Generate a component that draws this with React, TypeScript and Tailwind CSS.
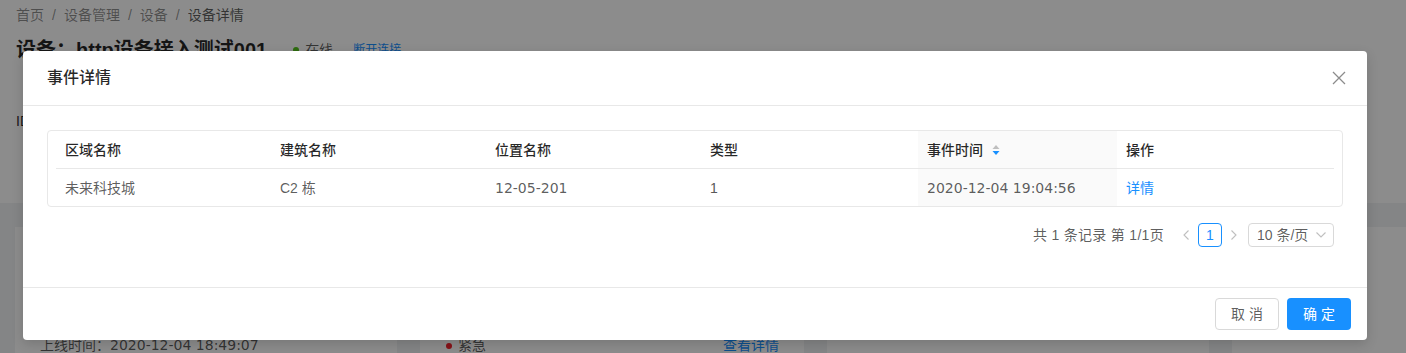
const cols = [
  { key: 'area', title: '区域名称', w: 'w-[215px]' },
  { key: 'building', title: '建筑名称', w: 'w-[215px]' },
  { key: 'place', title: '位置名称', w: 'w-[215px]' },
  { key: 'type', title: '类型', w: 'w-[217px]' },
  { key: 'time', title: '事件时间', w: 'w-[199px]', sorted: true },
  { key: 'op', title: '操作', w: 'w-[217px]' },
];

const rows = [
  { area: '未来科技城', building: 'C2 栋', place: '12-05-201', type: '1', time: '2020-12-04 19:04:56' },
];

// numbers in the reference are set wider than Arial metrics
const num = "font-['DejaVu_Sans','Noto_Sans_CJK_SC',sans-serif]";

function SortCaret() {
  return (
    <svg width="8" height="12" viewBox="0 0 8 12" className="ml-[9px]">
      <path d="M4 1 L7.5 5 L0.5 5 Z" fill="#bfbfbf" />
      <path d="M4 11 L7.5 7 L0.5 7 Z" fill="#1890ff" />
    </svg>
  );
}

function CloseIcon() {
  return (
    <svg width="14" height="14" viewBox="0 0 14 14" fill="none" stroke="currentColor" strokeWidth="1.3">
      <path d="M1 1 L13 13 M13 1 L1 13" />
    </svg>
  );
}

function Chevron({ dir }: { dir: 'left' | 'right' | 'down' }) {
  if (dir === 'down') {
    return (
      <svg width="10" height="6" viewBox="0 0 10 6" fill="none" stroke="#bfbfbf" strokeWidth="1.1">
        <path d="M0.5 0.5 L5 5 L9.5 0.5" />
      </svg>
    );
  }
  return (
    <svg width="6" height="10" viewBox="0 0 6 10" fill="none" stroke="#bfbfbf" strokeWidth="1.1">
      <path d={dir === 'left' ? 'M5.5 0.5 L1 5 L5.5 9.5' : 'M0.5 0.5 L5 5 L0.5 9.5'} />
    </svg>
  );
}

function EventTable() {
  return (
    <div className="rounded border border-[#e8e8e8] px-2">
      <div className="flex h-[38px] border-b border-[#e8e8e8] font-medium text-black/85">
        {cols.map((c) => (
          <div
            key={c.key}
            className={`${c.w} flex items-center px-[9px] ${c.sorted ? 'bg-[#fafafa]' : ''}`}
          >
            {c.title}
            {c.sorted && <SortCaret />}
          </div>
        ))}
      </div>
      {rows.map((r, i) => (
        <div key={i} className="flex h-[37px] text-black/65">
          <div className="w-[215px] flex items-center px-[9px]">{r.area}</div>
          <div className="w-[215px] flex items-center px-[9px]">{r.building}</div>
          <div className={`w-[215px] flex items-center px-[9px] ${num}`}>{r.place}</div>
          <div className="w-[217px] flex items-center px-[9px] text-[#595959]">{r.type}</div>
          <div className={`w-[199px] flex items-center px-[9px] bg-[#fafafa] ${num}`}>{r.time}</div>
          <div className="w-[217px] flex items-center px-[9px]">
            <a className="text-[#1890ff]">详情</a>
          </div>
        </div>
      ))}
    </div>
  );
}

function Pagination() {
  return (
    <div className="mr-[9px] mt-4 flex h-6 items-center justify-end text-black/65">
      <span className="mr-[10px] tracking-[0.3px]">共 1 条记录 第 1/1页</span>
      <div className="flex h-6 w-6 items-center justify-center">
        <Chevron dir="left" />
      </div>
      <div className="flex h-6 w-6 items-center justify-center rounded border border-[#1890ff] text-[#1890ff]">
        1
      </div>
      <div className="flex h-6 w-6 items-center justify-center">
        <Chevron dir="right" />
      </div>
      <div className="ml-[2px] flex h-6 w-[86px] items-center justify-between rounded border border-[#d9d9d9] pl-[8px] pr-[7px]">
        <span>10 条/页</span>
        <Chevron dir="down" />
      </div>
    </div>
  );
}

export default function App() {
  return (
    <div className="relative h-[353px] w-[1406px] overflow-hidden bg-[#f0f2f5] text-sm font-['Liberation_Sans','Noto_Sans_CJK_SC',sans-serif]">
      {/* page behind the modal */}
      <div className="h-[203px] bg-white px-4 pt-1">
        <div className="flex h-[22px] items-center text-black/45">
          <span>首页</span>
          <span className="mx-2">/</span>
          <span>设备管理</span>
          <span className="mx-2">/</span>
          <span>设备</span>
          <span className="mx-2">/</span>
          <span className="text-black/65">设备详情</span>
        </div>
        <div className="mt-[10px] flex h-7 items-center">
          <h1 className="text-xl font-semibold text-black/85">设备：http设备接入测试001</h1>
          <span className="ml-[26px] h-[6px] w-[6px] rounded-full bg-[#52c41a]" />
          <span className="ml-[6px] text-black/65">在线</span>
          <a className="ml-5 text-xs text-[#1890ff] underline">断开连接</a>
        </div>
        <div className="mt-[47px] text-black/85">ID</div>
      </div>
      <div className="flex gap-[23px] pl-[15px] pt-6">
        <div className="h-[200px] w-[382px] shrink-0 bg-white pl-[25px] pt-[108px] text-black/65">
          上线时间：<span className={num}>2020-12-04 18:49:07</span>
        </div>
        <div className="flex h-[200px] w-[384px] shrink-0 justify-between bg-white pl-[26px] pr-[25px] pt-[108px]">
          <span className="flex items-start text-black/65">
            <span className="mr-[6px] mt-[8px] h-[6px] w-[6px] rounded-full bg-[#f5222d]" />
            紧急
          </span>
          <a className="text-[#1890ff]">查看详情</a>
        </div>
        <div className="h-[200px] w-[382px] shrink-0 bg-white" />
        <div className="h-[200px] w-[382px] shrink-0 bg-white" />
      </div>

      {/* mask */}
      <div className="absolute inset-0 bg-black/45" />

      {/* modal */}
      <div className="absolute left-[23px] top-[51px] w-[1344px] rounded bg-white shadow-[0_4px_12px_rgba(0,0,0,0.15)]">
        <div className="flex h-[55px] items-center justify-between border-b border-[#e8e8e8] pl-6">
          <div className="text-base font-medium text-black/85">事件详情</div>
          <button className="flex h-[54px] w-14 items-center justify-center text-black/45">
            <CloseIcon />
          </button>
        </div>
        <div className="px-6 pb-6 pt-6">
          <EventTable />
          <Pagination />
          <div className="h-4" />
        </div>
        <div className="flex justify-end gap-2 border-t border-[#e8e8e8] px-4 py-[10px]">
          <button className="h-8 w-16 rounded border border-[#d9d9d9] bg-white text-black/65">取 消</button>
          <button className="h-8 w-16 rounded bg-[#1890ff] text-white">确 定</button>
        </div>
      </div>
    </div>
  );
}
